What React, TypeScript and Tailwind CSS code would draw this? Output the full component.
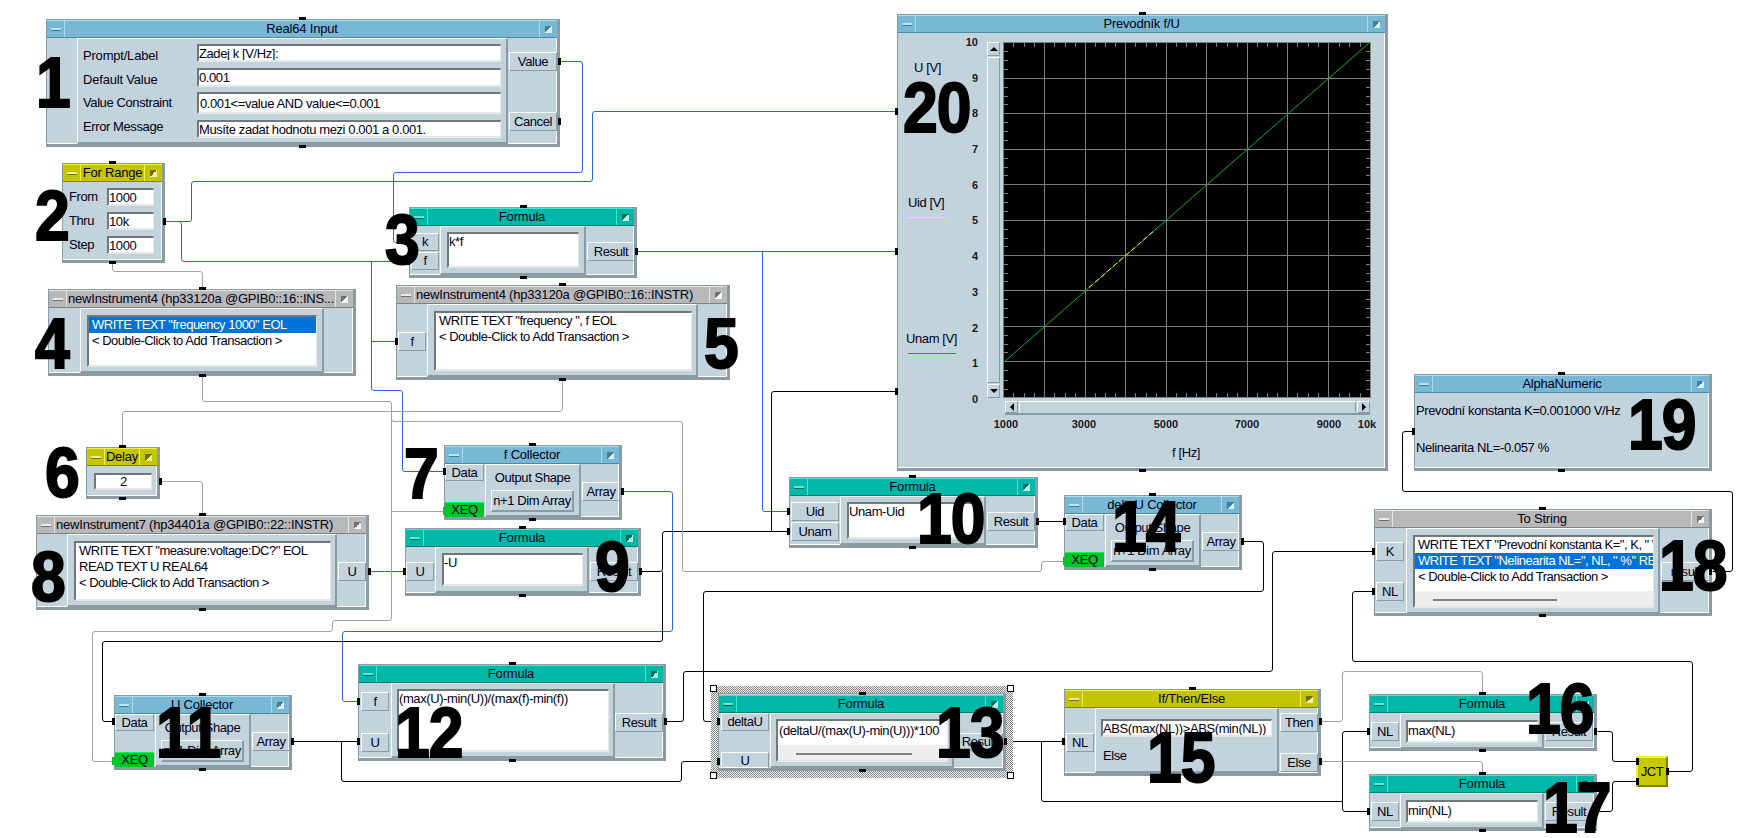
import React from "react";

type Tone = "blue" | "teal" | "yellow" | "grey";
const tones: Record<Tone, { bar: string; sep: string; minus: string; max: string }> = {
  blue: { bar: "bg-[#78b8d4] border-t-[#a8dcee] border-b-[#4a8aa6]", sep: "border-[#a8dcee]", minus: "bg-[#b8e4f4] border-[#3f7f9a]", max: "bg-[linear-gradient(135deg,#3f7f9a_50%,#d8f0f8_50%)]" },
  teal: { bar: "bg-[#00b8a8] border-t-[#40e8d0] border-b-[#008070]", sep: "border-[#40e8d0]", minus: "bg-[#60e8d0] border-[#006858]", max: "bg-[linear-gradient(135deg,#006858_50%,#b0f4e8_50%)]" },
  yellow: { bar: "bg-[#c4c400] border-t-[#f0f050] border-b-[#848400]", sep: "border-[#f0f050]", minus: "bg-[#f0f080] border-[#707000]", max: "bg-[linear-gradient(135deg,#707000_50%,#f8f8a0_50%)]" },
  grey: { bar: "bg-[#b8b8b8] border-t-[#e4e4e4] border-b-[#808080]", sep: "border-[#e4e4e4]", minus: "bg-[#ececec] border-[#707070]", max: "bg-[linear-gradient(135deg,#707070_50%,#f4f4f4_50%)]" },
};

function Node({ pos, tone, title, alignLeft, children }: { pos: string; tone: Tone; title: string; alignLeft?: boolean; children: React.ReactNode }) {
  const t = tones[tone];
  return (
    <div className={`absolute flex flex-col bg-[#c3d3dc] border-t border-l border-r-[3px] border-b-[3px] border-[#8b9ba4] shadow-[inset_-1px_-1px_0_#ffffff] ${pos}`}>
      <div className={`flex h-[18px] shrink-0 border-t border-b ${t.bar}`}>
        <div className={`flex w-[18px] shrink-0 items-center justify-center border-r ${t.sep}`}>
          <span className={`block h-[3px] w-[10px] border-b ${t.minus}`} />
        </div>
        <div className={`flex min-w-0 flex-1 items-center overflow-hidden whitespace-nowrap tracking-[-0.2px] ${alignLeft ? "justify-start pl-[1px]" : "justify-center"}`}>{title}</div>
        <div className={`flex w-[18px] shrink-0 items-center justify-center border-l ${t.sep}`}>
          <span className={`block h-[7px] w-[7px] ${t.max}`} />
        </div>
      </div>
      <div className="flex min-h-0 flex-1">{children}</div>
    </div>
  );
}

function Btn({ cls, children }: { cls: string; children: React.ReactNode }) {
  return <div className={`flex shrink-0 items-center justify-center whitespace-nowrap border border-t-white border-l-white border-r-[#8b9ba4] border-b-[#8b9ba4] ${cls}`}>{children}</div>;
}
function Panel({ cls, children }: { cls: string; children?: React.ReactNode }) {
  return <div className={`shrink-0 border-t border-l border-t-white border-l-white border-r-2 border-b-2 border-r-[#8b9ba4] border-b-[#8b9ba4] ${cls}`}>{children}</div>;
}
function Field({ cls, children }: { cls: string; children?: React.ReactNode }) {
  return <div className={`overflow-hidden whitespace-nowrap bg-white border-t-2 border-l-2 border-r border-b-2 border-t-[#707878] border-l-[#707878] border-r-[#e6e6e6] border-b-[#e6e6e6] ${cls}`}>{children}</div>;
}
function Rows({ rows, selected }: { rows: string[]; selected?: number }) {
  return (
    <>
      {rows.map((r, i) => (
        <div key={i} className={`h-[16px] whitespace-nowrap px-[3px] leading-[16px] tracking-[-0.5px] ${i === selected ? "bg-[#0072d8] text-white" : ""}`}>{r}</div>
      ))}
    </>
  );
}
function Scroll({ cls }: { cls: string }) {
  return (
    <div className="flex h-[17px] items-center bg-[#eeeeee]">
      <div className={`h-[2px] bg-[#808080] ${cls}`} />
    </div>
  );
}

function Collector({ pos, title }: { pos: string; title: string }) {
  return (
    <Node pos={`w-[178px] h-[75px] ${pos}`} tone="blue" title={title}>
      <div className="flex w-[40px] shrink-0 flex-col">
        <Btn cls="h-[17px] w-[39px]">Data</Btn>
        <div className="mt-[21px] flex h-[15px] w-[39px] items-center justify-center border-t border-[#00ff40] bg-[#00c428]">XEQ</div>
      </div>
      <Panel cls="flex h-[53px] w-[96px] flex-col items-center">
        <div className="mt-[5px] h-[16px] leading-[16px]">Output Shape</div>
        <Btn cls="mt-[4px] h-[22px] w-[83px] border-r-2 border-b-2">n+1 Dim Array</Btn>
      </Panel>
      <div className="flex flex-col pl-[1px]">
        <Btn cls="mt-[18px] h-[19px] w-[38px]">Array</Btn>
      </div>
    </Node>
  );
}

function Wire({ pts, color, w = 1 }: { pts: number[][]; color: string; w?: number }) {
  const p = pts.map(([x, y]) => [Math.round(x) + 0.5, Math.round(y) + 0.5]);
  const r = 2.5;
  let d = `M${p[0][0]} ${p[0][1]}`;
  for (let i = 1; i < p.length - 1; i++) {
    const [ax, ay] = p[i - 1], [bx, by] = p[i], [cx, cy] = p[i + 1];
    const l1 = Math.hypot(bx - ax, by - ay) || 1;
    const l2 = Math.hypot(cx - bx, cy - by) || 1;
    const r1 = Math.min(r, l1 / 2), r2 = Math.min(r, l2 / 2);
    d += ` L${bx - ((bx - ax) / l1) * r1} ${by - ((by - ay) / l1) * r1} Q${bx} ${by} ${bx + ((cx - bx) / l2) * r2} ${by + ((cy - by) / l2) * r2}`;
  }
  d += ` L${p[p.length - 1][0]} ${p[p.length - 1][1]}`;
  return <path d={d} fill="none" stroke={color} strokeWidth={w} />;
}

const BLUE = "#2f62dc";
const BLACK = "#000000";
const GREY = "#a0a4a4";

const wires: { pts: number[][]; c: string; w?: number }[] = [
  { c: BLUE, pts: [[560, 61], [582, 61], [582, 172], [393, 172], [393, 242], [408, 242]] },
  { c: BLUE, pts: [[164, 221], [191, 221], [191, 181], [592, 181], [592, 111], [896, 111]] },
  { c: BLUE, pts: [[164, 221], [181, 221], [181, 261], [408, 261]] },
  { c: BLUE, pts: [[371, 261], [371, 390], [402, 390], [402, 471], [444, 471]] },
  { c: BLUE, pts: [[371, 341], [396, 341]] },
  { c: BLUE, pts: [[637, 251], [896, 251]] },
  { c: BLUE, pts: [[762, 251], [762, 511], [789, 511]] },
  { c: BLUE, pts: [[369, 571], [404, 571]] },
  { c: BLUE, pts: [[622, 491], [672, 491], [672, 631], [342, 631], [342, 701], [358, 701]] },
  { c: BLACK, pts: [[641, 571], [662, 571], [662, 531], [789, 531]] },
  { c: BLACK, pts: [[771, 531], [771, 391], [896, 391]] },
  { c: BLACK, pts: [[662, 571], [662, 641], [102, 641], [102, 721], [113, 721]] },
  { c: BLACK, pts: [[292, 741], [358, 741]] },
  { c: BLACK, pts: [[341, 741], [341, 781], [681, 781], [681, 761], [718, 761]] },
  { c: BLACK, pts: [[666, 721], [683, 721], [683, 671], [1272, 671], [1272, 551], [1373, 551]] },
  { c: BLACK, pts: [[1242, 541], [1263, 541], [1263, 591], [703, 591], [703, 721], [718, 721]] },
  { c: BLACK, pts: [[1038, 521], [1064, 521]] },
  { c: BLACK, pts: [[1006, 741], [1064, 741]] },
  { c: BLACK, pts: [[1041, 741], [1041, 801], [1342, 801]] },
  { c: BLACK, pts: [[1342, 801], [1342, 731], [1368, 731]] },
  { c: BLACK, pts: [[1342, 801], [1342, 811], [1368, 811]] },
  { c: BLACK, pts: [[1597, 731], [1612, 731], [1612, 761], [1636, 761]] },
  { c: BLACK, pts: [[1597, 811], [1612, 811], [1612, 781], [1636, 781]] },
  { c: BLACK, pts: [[1668, 771], [1692, 771], [1692, 661], [1352, 661], [1352, 591], [1373, 591]] },
  { c: BLACK, pts: [[1712, 571], [1732, 571], [1732, 491], [1402, 491], [1402, 431], [1413, 431]] },
  { c: GREY, pts: [[112, 263], [112, 271], [202, 271], [202, 288]] },
  { c: GREY, pts: [[202, 376], [202, 401], [391, 401], [391, 620], [332, 620], [332, 631], [92, 631], [92, 761], [113, 761]] },
  { c: GREY, pts: [[391, 511], [444, 511]] },
  { c: GREY, pts: [[391, 415], [391, 421], [682, 421], [682, 571], [1041, 571], [1041, 561], [1064, 561]] },
  { c: GREY, pts: [[562, 380], [562, 411], [122, 411], [122, 446]] },
  { c: GREY, pts: [[160, 481], [202, 481], [202, 514]] },
  { c: GREY, pts: [[1320, 721], [1342, 721], [1342, 671], [1482, 671], [1482, 693]] },
  { c: GREY, pts: [[1320, 761], [1482, 761], [1482, 773]] },
];

// [cx, cy] of connection pins: side pins are tall, top and bottom pins are wide
const sidePins = [[559, 61], [559, 121], [164, 221], [396, 341], [160, 481], [444, 471], [622, 491], [369, 571], [404, 571], [640, 571], [408, 242], [408, 261], [636, 251], [896, 111], [896, 251], [896, 391], [788, 511], [788, 531], [1037, 521], [1064, 521], [1242, 541], [113, 721], [292, 741], [358, 701], [358, 741], [665, 721], [718, 721], [718, 761], [1005, 741], [1063, 741], [1320, 721], [1320, 761], [1368, 731], [1368, 811], [1595, 731], [1595, 811], [1637, 761], [1637, 781], [1667, 771], [1373, 551], [1373, 591], [1710, 571], [1413, 431]];
const widePins = [[302, 18], [302, 146], [112, 162], [112, 262], [202, 288], [202, 375], [562, 284], [562, 379], [122, 446], [122, 498], [532, 444], [532, 519], [202, 514], [202, 609], [522, 527], [522, 595], [523, 206], [523, 277], [912, 476], [912, 547], [1142, 13], [1142, 470], [1152, 494], [1152, 569], [202, 694], [202, 769], [512, 663], [512, 760], [862, 693], [862, 770], [1192, 688], [1482, 693], [1482, 750], [1482, 773], [1482, 830], [1542, 508], [1542, 615], [1561, 373], [1561, 470]];
const greenPins = [[444, 511], [1064, 561], [113, 761]];

const bigNumbers = [
  { t: "1", c: "left-[36px] top-[57px]" },
  { t: "2", c: "left-[35px] top-[190px]" },
  { t: "3", c: "left-[385px] top-[214px]" },
  { t: "4", c: "left-[35px] top-[318px]" },
  { t: "5", c: "left-[704px] top-[318px]" },
  { t: "6", c: "left-[45px] top-[447px]" },
  { t: "7", c: "left-[404px] top-[448px]" },
  { t: "8", c: "left-[31px] top-[551px]" },
  { t: "9", c: "left-[595px] top-[541px]" },
  { t: "10", c: "left-[917px] top-[493px]" },
  { t: "11", c: "left-[156px] top-[707px]" },
  { t: "12", c: "left-[395px] top-[707px]" },
  { t: "13", c: "left-[936px] top-[707px]" },
  { t: "14", c: "left-[1112px] top-[501px]" },
  { t: "15", c: "left-[1147px] top-[732px]" },
  { t: "16", c: "left-[1526px] top-[683px]" },
  { t: "17", c: "left-[1543px] top-[782px]" },
  { t: "18", c: "left-[1659px] top-[540px]" },
  { t: "19", c: "left-[1628px] top-[399px]" },
  { t: "20", c: "left-[903px] top-[82px]" },
];

const gx = [41, 82, 122, 163, 203, 244, 284, 325];
const gy = [36, 71, 107, 142, 178, 213, 248, 284, 319];

function Plot() {
  const xs = [0, ...gx, 367];
  const ys = [0, ...gy, 356];
  const xt: number[] = [];
  const yt: number[] = [];
  for (let i = 0; i < xs.length - 1; i++) for (let k = 1; k < 4; k++) xt.push(Math.round(xs[i] + ((xs[i + 1] - xs[i]) * k) / 4));
  for (let i = 0; i < ys.length - 1; i++) for (let k = 1; k < 4; k++) yt.push(Math.round(ys[i] + ((ys[i + 1] - ys[i]) * k) / 4));
  return (
    <svg width="368" height="356" viewBox="0 0 368 356" className="ml-[3px] mt-[9px] block shrink-0" shapeRendering="crispEdges">
      <rect x="0" y="0" width="368" height="356" fill="#000000" />
      <g stroke="#808080" strokeWidth="1">
        {gx.map((x) => <line key={x} x1={x + 0.5} x2={x + 0.5} y1="0" y2="356" />)}
        {gy.map((y) => <line key={y} y1={y + 0.5} y2={y + 0.5} x1="0" x2="368" />)}
        {xt.map((x) => <line key={"t" + x} x1={x + 0.5} x2={x + 0.5} y1="0" y2="5" />)}
        {xt.map((x) => <line key={"b" + x} x1={x + 0.5} x2={x + 0.5} y1="351" y2="356" />)}
        {yt.map((y) => <line key={"l" + y} y1={y + 0.5} y2={y + 0.5} x1="0" x2="5" />)}
        {yt.map((y) => <line key={"r" + y} y1={y + 0.5} y2={y + 0.5} x1="363" x2="368" />)}
      </g>
      <rect x="0.5" y="0.5" width="367" height="355" fill="none" stroke="#808080" />
      <line x1="1" y1="320" x2="366" y2="1" stroke="#00b020" strokeWidth="1" shapeRendering="auto" />
      <line x1="86" y1="245.5" x2="153" y2="187" stroke="#ffff00" strokeWidth="1" strokeDasharray="5 3" shapeRendering="auto" />
    </svg>
  );
}

export default function App() {
  return (
    <div className="relative h-[838px] w-[1741px] overflow-hidden bg-white text-[13px] tracking-[-0.4px] text-[#000018] [font-family:'Liberation_Sans',Arial,sans-serif]">
      <svg className="absolute left-0 top-0" width="1741" height="838" viewBox="0 0 1741 838">
        {wires.map((w, i) => <Wire key={i} pts={w.pts} color={w.c} w={w.w} />)}
      </svg>

      {/* 1 */}
      <Node pos="left-[46px] top-[19px] w-[514px] h-[128px]" tone="blue" title="Real64 Input">
        <div className="w-[30px] shrink-0" />
        <Panel cls="flex h-[106px] w-[431px] flex-col pl-[5px] pt-[5px]">
          <div className="flex h-[18px] items-center"><span className="mt-[6px] w-[114px] tracking-[-0.2px]">Prompt/Label</span><Field cls="h-[18px] w-[304px] leading-[15px]">Zadej k [V/Hz]:</Field></div>
          <div className="mt-[6px] flex h-[19px] items-center"><span className="mt-[5px] w-[114px] tracking-[-0.2px]">Default Value</span><Field cls="h-[19px] w-[304px] leading-[16px]">0.001</Field></div>
          <div className="mt-[5px] flex h-[22px] items-center"><span className="w-[114px]">Value Constraint</span><Field cls="h-[22px] w-[304px] pl-[1px] leading-[19px]">0.001&lt;=value AND value&lt;=0.001</Field></div>
          <div className="mt-[6px] flex h-[18px] items-center"><span className="-mt-[4px] w-[114px]">Error Message</span><Field cls="h-[18px] w-[304px] leading-[15px]">Musíte zadat hodnotu mezi 0.001 a 0.001.</Field></div>
        </Panel>
        <div className="flex flex-col pl-[1px]">
          <Btn cls="mt-[14px] h-[19px] w-[48px]">Value</Btn>
          <Btn cls="mt-[41px] h-[19px] w-[48px]">Cancel</Btn>
        </div>
      </Node>

      {/* 2 */}
      <Node pos="left-[62px] top-[163px] w-[103px] h-[100px]" tone="yellow" title="For Range">
        <div className="flex w-full flex-col pl-[6px] pt-[6px]">
          <div className="flex h-[18px] items-center"><span className="w-[38px]">From</span><Field cls="h-[18px] w-[47px] leading-[15px]">1000</Field></div>
          <div className="mt-[6px] flex h-[18px] items-center"><span className="w-[38px]">Thru</span><Field cls="h-[18px] w-[47px] leading-[15px]">10k</Field></div>
          <div className="mt-[6px] flex h-[18px] items-center"><span className="w-[38px]">Step</span><Field cls="h-[18px] w-[47px] leading-[15px]">1000</Field></div>
        </div>
      </Node>

      {/* 3 */}
      <Node pos="left-[409px] top-[207px] w-[228px] h-[71px]" tone="teal" title="Formula">
        <div className="flex w-[30px] shrink-0 flex-col pl-[1px]">
          <Btn cls="mt-[7px] h-[18px] w-[28px]">k</Btn>
          <Btn cls="mt-[1px] h-[18px] w-[28px]">f</Btn>
        </div>
        <Panel cls="h-[49px] w-[146px] pl-[6px] pt-[5px]"><Field cls="h-[36px] w-[132px] leading-[16px]">k*f</Field></Panel>
        <div className="flex flex-col pl-[1px]"><Btn cls="mt-[16px] h-[19px] w-[48px]">Result</Btn></div>
      </Node>

      {/* 4 */}
      <Node pos="left-[48px] top-[289px] w-[308px] h-[87px]" tone="grey" title="newInstrument4 (hp33120a @GPIB0::16::INS..." alignLeft>
        <div className="w-[31px] shrink-0" />
        <Panel cls="h-[65px] w-[244px] pl-[6px] pt-[6px]">
          <Field cls="h-[52px] w-[230px]"><Rows rows={['WRITE TEXT "frequency 1000" EOL', "< Double-Click to Add Transaction >"]} selected={0} /></Field>
        </Panel>
      </Node>

      {/* 5 */}
      <Node pos="left-[396px] top-[285px] w-[334px] h-[95px]" tone="grey" title="newInstrument4 (hp33120a @GPIB0::16::INSTR)" alignLeft>
        <div className="flex w-[30px] shrink-0 flex-col pl-[1px]"><Btn cls="mt-[28px] h-[19px] w-[28px]">f</Btn></div>
        <Panel cls="h-[73px] w-[271px] pl-[6px] pt-[6px]">
          <Field cls="h-[60px] w-[258px]"><Rows rows={['WRITE TEXT "frequency ", f EOL', "< Double-Click to Add Transaction >"]} /></Field>
        </Panel>
      </Node>

      {/* 6 */}
      <Node pos="left-[86px] top-[447px] w-[74px] h-[52px]" tone="yellow" title="Delay">
        <div className="pl-[7px] pt-[7px]"><Field cls="h-[17px] w-[58px] text-center leading-[14px]">2</Field></div>
      </Node>

      {/* 7 */}
      <Collector pos="left-[444px] top-[445px]" title="f Collector" />

      {/* 8 */}
      <Node pos="left-[36px] top-[515px] w-[333px] h-[95px]" tone="grey" title="newInstrument7 (hp34401a @GPIB0::22::INSTR)" alignLeft>
        <div className="w-[30px] shrink-0" />
        <Panel cls="h-[73px] w-[270px] pl-[6px] pt-[6px]">
          <Field cls="h-[60px] w-[257px]"><Rows rows={['WRITE TEXT "measure:voltage:DC?" EOL', "READ TEXT U REAL64", "< Double-Click to Add Transaction >"]} /></Field>
        </Panel>
        <div className="flex flex-col pl-[1px]"><Btn cls="mt-[28px] h-[19px] w-[28px]">U</Btn></div>
      </Node>

      {/* 9 */}
      <Node pos="left-[405px] top-[528px] w-[236px] h-[68px]" tone="teal" title="Formula">
        <div className="flex w-[29px] shrink-0 flex-col"><Btn cls="mt-[15px] h-[19px] w-[28px]">U</Btn></div>
        <Panel cls="h-[46px] w-[154px] pl-[6px] pt-[5px]"><Field cls="h-[33px] w-[141px] leading-[16px]">-U</Field></Panel>
        <div className="flex flex-col pl-[1px]"><Btn cls="mt-[15px] h-[19px] w-[48px]">Result</Btn></div>
      </Node>

      {/* 10 */}
      <Node pos="left-[789px] top-[477px] w-[249px] h-[71px]" tone="teal" title="Formula">
        <div className="flex w-[50px] shrink-0 flex-col pl-[1px]">
          <Btn cls="mt-[6px] h-[19px] w-[48px]">Uid</Btn>
          <Btn cls="mt-[1px] h-[19px] w-[48px]">Unam</Btn>
        </div>
        <Panel cls="h-[49px] w-[146px] pl-[6px] pt-[5px]"><Field cls="h-[37px] w-[132px] leading-[16px]">Unam-Uid</Field></Panel>
        <div className="flex flex-col pl-[1px]"><Btn cls="mt-[16px] h-[19px] w-[48px]">Result</Btn></div>
      </Node>

      {/* 14 */}
      <Collector pos="left-[1064px] top-[495px]" title="deltaU Collector" />

      {/* 11 */}
      <Collector pos="left-[114px] top-[695px]" title="U Collector" />

      {/* 12 */}
      <Node pos="left-[358px] top-[664px] w-[308px] h-[97px]" tone="teal" title="Formula">
        <div className="flex w-[32px] shrink-0 flex-col pl-[2px]">
          <Btn cls="mt-[9px] h-[19px] w-[28px]">f</Btn>
          <Btn cls="mt-[22px] h-[19px] w-[28px]">U</Btn>
        </div>
        <Panel cls="h-[75px] w-[224px] pl-[5px] pt-[5px]"><Field cls="h-[63px] w-[212px] leading-[16px]">(max(U)-min(U))/(max(f)-min(f))</Field></Panel>
        <div className="flex flex-col"><Btn cls="mt-[30px] h-[19px] w-[48px]">Result</Btn></div>
      </Node>

      {/* 13 */}
      <div className="absolute left-[711px] top-[686px] h-[92px] w-[302px] bg-[repeating-conic-gradient(#808080_0_25%,#ffffff_0_50%)] bg-[length:2px_2px]" />
      <Node pos="left-[718px] top-[693px] w-[288px] h-[78px] pt-[1px]" tone="teal" title="Formula">
        <div className="flex w-[51px] shrink-0 flex-col pl-[2px]">
          <Btn cls="h-[18px] w-[48px]">deltaU</Btn>
          <Btn cls="mt-[21px] h-[17px] w-[48px]">U</Btn>
        </div>
        <Panel cls="h-[55px] w-[184px] pl-[5px] pt-[5px]">
          <Field cls="h-[43px] w-[172px]">
            <div className="h-[24px] pl-[1px] leading-[20px]">(deltaU/(max(U)-min(U)))*100</div>
            <Scroll cls="ml-[18px] w-[116px]" />
          </Field>
        </Panel>
        <div className="flex flex-col pl-[1px]"><Btn cls="mt-[20px] h-[18px] w-[48px]">Result</Btn></div>
      </Node>
      <div className="absolute left-[710px] top-[685px] h-[7px] w-[7px] border border-black bg-white" />
      <div className="absolute left-[1007px] top-[685px] h-[7px] w-[7px] border border-black bg-white" />
      <div className="absolute left-[710px] top-[772px] h-[7px] w-[7px] border border-black bg-white" />
      <div className="absolute left-[1007px] top-[772px] h-[7px] w-[7px] border border-black bg-white" />

      {/* 15 */}
      <Node pos="left-[1064px] top-[689px] w-[257px] h-[87px]" tone="yellow" title="If/Then/Else">
        <div className="flex w-[30px] shrink-0 flex-col pl-[1px]"><Btn cls="mt-[25px] h-[19px] w-[28px]">NL</Btn></div>
        <Panel cls="h-[65px] w-[184px] pl-[5px] pt-[10px]">
          <Field cls="h-[18px] w-[171px] leading-[15px]">ABS(max(NL))&gt;ABS(min(NL))</Field>
          <div className="mt-[11px] h-[16px] pl-[2px] leading-[16px]">Else</div>
        </Panel>
        <div className="flex flex-col pl-[1px]">
          <Btn cls="mt-[5px] h-[19px] w-[38px]">Then</Btn>
          <Btn cls="mt-[21px] h-[19px] w-[38px]">Else</Btn>
        </div>
      </Node>

      {/* 16 */}
      <Node pos="left-[1369px] top-[694px] w-[228px] h-[57px]" tone="teal" title="Formula">
        <div className="flex w-[30px] shrink-0 flex-col pl-[1px]"><Btn cls="mt-[9px] h-[19px] w-[28px]">NL</Btn></div>
        <Panel cls="h-[36px] w-[144px] pl-[5px] pt-[6px]"><Field cls="h-[23px] w-[132px] leading-[18px]">max(NL)</Field></Panel>
        <div className="flex flex-col pl-[1px]"><Btn cls="mt-[9px] h-[19px] w-[48px]">Result</Btn></div>
      </Node>

      {/* 17 */}
      <Node pos="left-[1369px] top-[774px] w-[228px] h-[57px]" tone="teal" title="Formula">
        <div className="flex w-[30px] shrink-0 flex-col pl-[1px]"><Btn cls="mt-[9px] h-[19px] w-[28px]">NL</Btn></div>
        <Panel cls="h-[36px] w-[144px] pl-[5px] pt-[6px]"><Field cls="h-[23px] w-[132px] leading-[18px]">min(NL)</Field></Panel>
        <div className="flex flex-col pl-[1px]"><Btn cls="mt-[9px] h-[19px] w-[48px]">Result</Btn></div>
      </Node>

      {/* JCT */}
      <div className="absolute left-[1636px] top-[756px] flex h-[31px] w-[32px] items-center justify-center border-t-2 border-l-2 border-r-2 border-b-2 border-t-[#f0f040] border-l-[#f0f040] border-r-[#808000] border-b-[#808000] bg-[#c8c800]">JCT</div>

      {/* 18 */}
      <Node pos="left-[1374px] top-[509px] w-[338px] h-[107px]" tone="grey" title="To String">
        <div className="flex w-[31px] shrink-0 flex-col pl-[1px]">
          <Btn cls="mt-[14px] h-[19px] w-[28px]">K</Btn>
          <Btn cls="mt-[21px] h-[19px] w-[28px]">NL</Btn>
        </div>
        <Panel cls="h-[86px] w-[254px] pl-[6px] pt-[6px]">
          <Field cls="h-[73px] w-[241px]">
            <div className="h-[54px] overflow-hidden">
              <Rows rows={['WRITE TEXT "Prevodní konstanta K=", K, " V/Hz" EOL', 'WRITE TEXT "Nelinearita NL=", NL, " %" READ', "< Double-Click to Add Transaction >"]} selected={1} />
            </div>
            <Scroll cls="ml-[18px] w-[124px]" />
          </Field>
        </Panel>
        <div className="flex flex-col pl-[1px]"><Btn cls="mt-[34px] h-[19px] w-[49px]">result</Btn></div>
      </Node>

      {/* 19 */}
      <Node pos="left-[1414px] top-[374px] w-[298px] h-[97px]" tone="blue" title="AlphaNumeric">
        <div className="flex flex-col pl-[1px]">
          <div className="mt-[10px] h-[16px] whitespace-nowrap leading-[16px]">Prevodní konstanta K=0.001000 V/Hz</div>
          <div className="mt-[21px] h-[16px] whitespace-nowrap leading-[16px]">Nelinearita NL=-0.057 %</div>
        </div>
      </Node>

      {/* 20 */}
      <Node pos="left-[897px] top-[14px] w-[491px] h-[457px]" tone="blue" title="Prevodník f/U">
        <div className="flex w-full flex-col pl-[1px]">
          <div className="flex h-[365px]">
            <div className="flex w-[60px] shrink-0 flex-col">
              <div className="ml-[15px] mt-[27px] h-[16px] leading-[16px]">U [V]</div>
              <div className="ml-[9px] mt-[119px] h-[16px] leading-[16px]">Uid [V]</div>
              <div className="ml-[9px] mt-[6px] h-[1px] w-[37px] bg-[#ffff00]" />
              <div className="ml-[7px] mt-[113px] h-[16px] leading-[16px]">Unam [V]</div>
              <div className="ml-[9px] mt-[6px] h-[1px] w-[48px] bg-[#00b020]" />
            </div>
            <div className="mt-[2px] flex h-[371px] w-[19px] shrink-0 flex-col justify-between text-right text-[11px] font-bold leading-[14px] tracking-normal text-[#181828]">
              {[10, 9, 8, 7, 6, 5, 4, 3, 2, 1, 0].map((n) => <span key={n} className="block h-[14px]">{n}</span>)}
            </div>
            <div className="ml-[9px] mt-[9px] flex h-[356px] w-[13px] shrink-0 flex-col bg-[#c3d3dc]">
              <Btn cls="h-[14px] w-[13px]"><span className="block h-0 w-0 border-x-[4px] border-b-[4px] border-x-transparent border-b-black" /></Btn>
              <div className="my-[1px] flex-1 border border-t-white border-l-white border-r-[#8b9ba4] border-b-[#8b9ba4]" />
              <Btn cls="h-[14px] w-[13px]"><span className="block h-0 w-0 border-x-[4px] border-t-[4px] border-x-transparent border-t-black" /></Btn>
            </div>
            <Plot />
          </div>
          <div className="ml-[106px] mt-[3px] flex h-[14px] w-[365px] border-b-2 border-[#8b9ba4]">
            <Btn cls="h-[12px] w-[13px]"><span className="block h-0 w-0 border-y-[4px] border-r-[4px] border-y-transparent border-r-black" /></Btn>
            <div className="mx-[1px] flex-1 border border-t-white border-l-white border-r-[#8b9ba4] border-b-transparent" />
            <Btn cls="h-[12px] w-[13px]"><span className="block h-0 w-0 border-y-[4px] border-l-[4px] border-y-transparent border-l-black" /></Btn>
          </div>
          <div className="mt-[2px] flex h-[14px] text-[11px] font-bold leading-[14px] tracking-normal text-[#181828]">
            <span className="ml-[77px] w-[60px] shrink-0 text-center">1000</span>
            <span className="ml-[18px] w-[60px] shrink-0 text-center">3000</span>
            <span className="ml-[22px] w-[60px] shrink-0 text-center">5000</span>
            <span className="ml-[21px] w-[60px] shrink-0 text-center">7000</span>
            <span className="ml-[22px] w-[60px] shrink-0 text-center">9000</span>
            <span className="-ml-[22px] w-[60px] shrink-0 text-center">10k</span>
          </div>
          <div className="ml-[257px] mt-[14px] h-[16px] w-[60px] text-center leading-[16px]">f [Hz]</div>
        </div>
      </Node>

      <svg className="absolute left-0 top-0" width="1741" height="838" viewBox="0 0 1741 838" shapeRendering="crispEdges">
        {sidePins.map(([x, y], i) => <rect key={i} x={x - 1} y={y - 3} width="3" height="7" fill="#000000" />)}
        {widePins.map(([x, y], i) => <rect key={i} x={x - 3} y={y - 1} width="7" height="3" fill="#000000" />)}
        {greenPins.map(([x, y], i) => <rect key={i} x={x - 1} y={y - 4} width="3" height="8" fill="#00c428" />)}
      </svg>

      {bigNumbers.map((n) => (
        <div key={n.t} className={`absolute h-[51px] origin-top-left scale-x-[0.88] whitespace-nowrap text-[71px] font-bold leading-[51px] tracking-[-1px] text-black [-webkit-text-stroke:2px_#000000] ${n.c}`}>{n.t}</div>
      ))}
    </div>
  );
}
